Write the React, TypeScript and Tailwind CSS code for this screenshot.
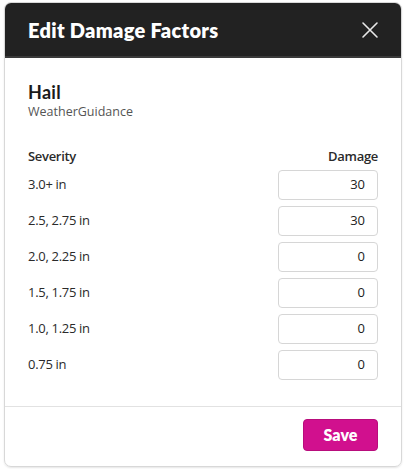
import React from "react";

const rows = [
  { label: "3.0+ in", value: "30" },
  { label: "2.5, 2.75 in", value: "30" },
  { label: "2.0, 2.25 in", value: "0" },
  { label: "1.5, 1.75 in", value: "0" },
  { label: "1.0, 1.25 in", value: "0" },
  { label: "0.75 in", value: "0" },
];

export default function App() {
  return (
    <div className="w-[406px] h-[469px] bg-white pt-[2px] px-[4px]" style={{ fontFamily: "Lato, 'Open Sans', sans-serif" }}>
      <div className="w-[398px] h-[465px] rounded-[7px] border border-[#d8d8d8] overflow-hidden flex flex-col shadow-[0_1px_2px_rgba(0,0,0,0.1)]">
        <div className="h-[55px] bg-[#222222] border-b-2 border-[#3a3a3a] flex items-center justify-between pl-[23px] pr-[22px] shrink-0">
          <span className="text-white text-[20px] font-extrabold tracking-[0.3px]">Edit Damage Factors</span>
          <svg width="18" height="18" viewBox="0 0 18 18" fill="none" stroke="#e8e8e8" strokeWidth="1.6" strokeLinecap="round">
            <path d="M2 2 L16 16 M16 2 L2 16" />
          </svg>
        </div>
        <div className="flex-1 px-[23px] pt-[24px]">
          <div className="text-[#1a1a1a] text-[18px] font-bold leading-[20px] tracking-[0.3px]">Hail</div>
          <div className="text-[#555] text-[12.5px] leading-[18px] mt-[1px]" style={{ fontFamily: "'Open Sans', sans-serif" }}>WeatherGuidance</div>
          <div className="mt-[26px]" style={{ fontFamily: "'Open Sans', sans-serif" }}>
            <div className="flex justify-between text-[13px] font-semibold text-[#2a2a2a] leading-[18px] tracking-[-0.3px]">
              <span>Severity</span>
              <span>Damage</span>
            </div>
            <div className="flex flex-col gap-[6px] mt-[5px]">
              {rows.map((r) => (
                <div key={r.label} className="flex items-center justify-between">
                  <span className="text-[13px] text-[#2a2a2a] tracking-[-0.3px]">{r.label}</span>
                  <div className="w-[100px] h-[30px] rounded-[4px] border border-[#d6d6d6] flex items-center justify-end pr-[12px] text-[13px] text-[#222]">
                    {r.value}
                  </div>
                </div>
              ))}
            </div>
          </div>
        </div>
        <div className="h-[60px] border-t border-[#e2e2e2] flex items-start pt-[12px] justify-end pr-[23px] shrink-0">
          <button className="w-[75px] h-[32px] rounded-[4px] bg-[#d1108e] border border-[#b80d7c] text-white text-[16px] font-extrabold">
            Save
          </button>
        </div>
      </div>
    </div>
  );
}
